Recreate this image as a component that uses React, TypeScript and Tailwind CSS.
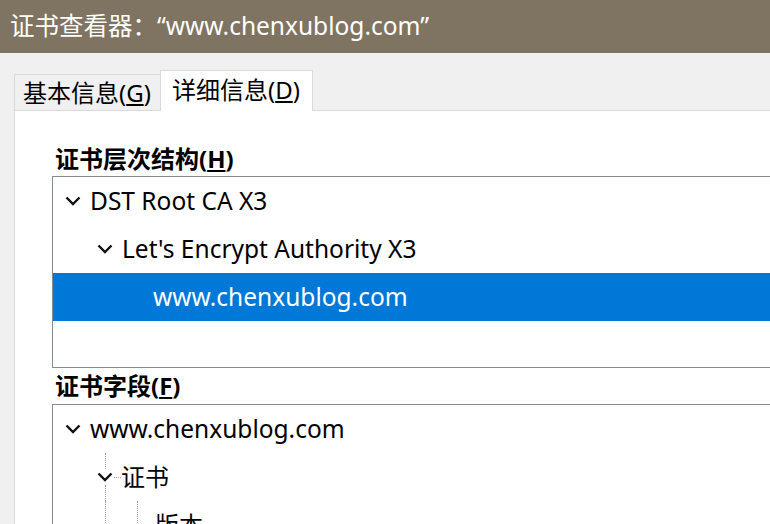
import React from "react";

const Chevron = () => (
  <svg width="16" height="10" viewBox="0 0 16 10" className="shrink-0">
    <polyline points="1.5,1.5 8,8 14.5,1.5" fill="none" stroke="#111" strokeWidth="2.4" />
  </svg>
);

const font = {
  fontFamily: '"Noto Sans", "Noto Sans CJK SC", sans-serif',
};

export default function App() {
  return (
    <div
      className="w-[770px] h-[524px] overflow-hidden bg-[#f0f0f0] flex flex-col"
      style={font}
    >
      {/* Title bar */}
      <div className="h-[53px] shrink-0 bg-[#7f7461] flex items-center pl-[10px] text-white text-[24.5px] leading-none">
        证书查看器：“www.chenxublog.com”
      </div>

      {/* Tabs */}
      <div className="h-[57px] shrink-0 flex items-end pl-[14px]">
        <div className="h-[36px] w-[146px] border-t border-l border-[#d9d9d9] bg-[#f0f0f0] flex items-center pl-[8px] text-[24px] text-black leading-none">
          基本信息(<span className="underline underline-offset-2">G</span>)
        </div>
        <div className="relative z-10 -mb-px h-[41px] w-[153px] border border-b-0 border-[#d9d9d9] bg-white flex items-center pl-[11px] pb-[3px] text-[24px] text-black leading-none">
          详细信息(<span className="underline underline-offset-2">D</span>)
        </div>
      </div>

      {/* Panel */}
      <div className="flex-1 ml-[14px] border-l border-t border-[#d9d9d9] bg-white pt-[31px] pl-[37px]">
        <div className="h-[34px] flex items-center text-[24px] font-bold text-black leading-none pl-[3px]">
          证书层次结构(<span className="underline underline-offset-2">H</span>)
        </div>
        <div className="h-[192px] border-t border-l border-b border-[#868a91]">
          <div className="h-[48px] flex items-center pl-[12px] text-[24.5px] text-black">
            <Chevron />
            <span className="ml-[9px]">DST Root CA X3</span>
          </div>
          <div className="h-[48px] flex items-center pl-[44px] text-[24.5px] text-black">
            <Chevron />
            <span className="ml-[9px]">Let's Encrypt Authority X3</span>
          </div>
          <div className="h-[48px] flex items-center pl-[100px] text-[24.5px] text-white bg-[#0078d7]">
            <span>www.chenxublog.com</span>
          </div>
        </div>

        <div className="h-[36px] flex items-center text-[24px] font-bold text-black leading-none pl-[3px]">
          证书字段(<span className="underline underline-offset-2">F</span>)
        </div>
        <div className="h-[200px] border-t border-l border-[#868a91]">
          <div className="h-[48px] flex items-center pl-[12px] text-[24.5px] text-black">
            <Chevron />
            <span className="ml-[9px]">www.chenxublog.com</span>
          </div>
          <div className="relative h-[48px] flex items-center pl-[44px] text-[24px] text-black">
            <span className="absolute left-[52px] top-0 h-[16px] border-l border-dotted border-[#a0a0a0]" />
            <span className="absolute left-[52px] top-[32px] bottom-0 border-l border-dotted border-[#a0a0a0]" />
            <span className="absolute left-[61px] top-[24px] w-[7px] border-t border-dotted border-[#a0a0a0]" />
            <Chevron />
            <span className="ml-[8px]">证书</span>
          </div>
          <div className="relative h-[48px] flex items-center pl-[102px] text-[24px] text-black">
            <span className="absolute left-[52px] top-0 bottom-0 border-l border-dotted border-[#a0a0a0]" />
            <span className="absolute left-[84px] top-0 bottom-0 border-l border-dotted border-[#a0a0a0]" />
            <span className="absolute left-[85px] top-[24px] w-[14px] border-t border-dotted border-[#a0a0a0]" />
            <span>版本</span>
          </div>
        </div>
      </div>
    </div>
  );
}
